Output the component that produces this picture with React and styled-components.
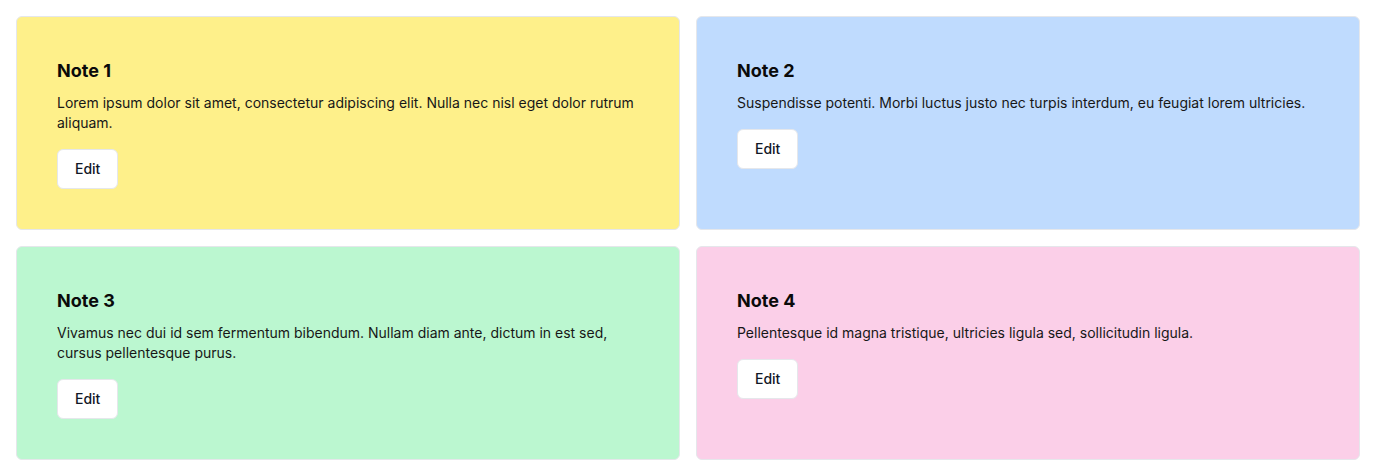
import React from 'react'
import styled, { createGlobalStyle } from 'styled-components'

const GlobalStyle = createGlobalStyle`
    * { box-sizing: border-box; }
    body {
        margin: 0;
        background: #ffffff;
        font-family: Inter, "Noto Sans", sans-serif;
        color: #111827;
    }
`

const Board = styled.div`
    display: grid;
    grid-template-columns: 1fr 1fr;
    grid-auto-rows: 1fr;
    gap: 16px;
    padding: 16px;
`

const Card = styled.div`
    background-color: ${props => props.color};
    border: 1px solid #e5e7eb;
    border-radius: 6px;
    padding: 40px;
    display: flex;
    flex-direction: column;
    align-items: flex-start;
`

const Title = styled.h2`
    margin: 0 0 8px;
    font-size: 18px;
    line-height: 28px;
    font-weight: 700;
    color: #0a0a0a;
`

const Body = styled.p`
    margin: 0 0 16px;
    font-size: 14px;
    line-height: 20px;
    color: #171717;
`

const EditBtn = styled.button`
    font-family: inherit;
    font-size: 14px;
    line-height: 20px;
    font-weight: 500;
    color: #111827;
    background: #ffffff;
    border: 1px solid #e5e7eb;
    border-radius: 6px;
    height: 40px;
    padding: 0 17px;
    cursor: pointer;
`

const notes = [
    { title: 'Note 1', color: '#fef08a', text: 'Lorem ipsum dolor sit amet, consectetur adipiscing elit. Nulla nec nisl eget dolor rutrum aliquam.' },
    { title: 'Note 2', color: '#bfdbfe', text: 'Suspendisse potenti. Morbi luctus justo nec turpis interdum, eu feugiat lorem ultricies.' },
    { title: 'Note 3', color: '#bbf7d0', text: 'Vivamus nec dui id sem fermentum bibendum. Nullam diam ante, dictum in est sed, cursus pellentesque purus.' },
    { title: 'Note 4', color: '#fbcfe8', text: 'Pellentesque id magna tristique, ultricies ligula sed, sollicitudin ligula.' },
]

function App() {
    return (
        <>
            <GlobalStyle />
            <Board>
                {notes.map(n => (
                    <Card key={n.title} color={n.color}>
                        <Title>{n.title}</Title>
                        <Body>{n.text}</Body>
                        <EditBtn>Edit</EditBtn>
                    </Card>
                ))}
            </Board>
        </>
    )
}

export default App
